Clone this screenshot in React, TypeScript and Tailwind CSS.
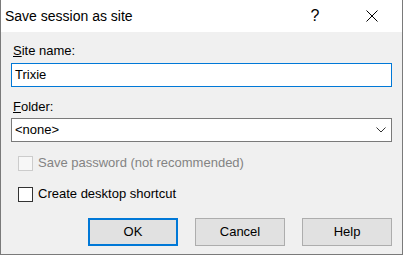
import React from 'react';

const font = { fontFamily: '"Liberation Sans", Arial, sans-serif' };

export default function App() {
  return (
    <div className="w-[403px] h-[255px] bg-[#f0f0f0] flex flex-col border-x border-b border-[#7a7a7a] text-black text-[13px] leading-[16px]" style={font}>
      {/* Title bar */}
      <div className="h-[32px] bg-white flex items-center shrink-0">
        <span className="pl-[4px] text-[14px] flex-1">Save session as site</span>
        <span className="w-[46px] text-center text-[16px] mr-[11px]">?</span>
        <div className="w-[46px] h-[32px] flex items-center justify-center mr-[7px]">
          <svg width="12" height="12" viewBox="0 0 12 12" stroke="#000" strokeWidth="1">
            <path d="M0.5 0.5L11.5 11.5M11.5 0.5L0.5 11.5" />
          </svg>
        </div>
      </div>

      {/* Body */}
      <div className="flex flex-col px-[10px]">
        <label className="mt-[11px] pl-[2px] h-[16px]">
          <span className="underline">S</span>ite name:
        </label>
        <div className="mt-[4px] h-[24px] bg-white border border-[#0078d7] flex items-center pl-[3px]">
          Trixie
        </div>

        <label className="mt-[12px] pl-[2px] h-[16px]">
          <span className="underline">F</span>older:
        </label>
        <div className="mt-[3px] h-[24px] bg-white border border-[#7a7a7a] flex items-center pl-[3px] pr-[5px]">
          <span className="flex-1">&lt;none&gt;</span>
          <svg width="10" height="6" viewBox="0 0 10 6" fill="none" stroke="#333" strokeWidth="1">
            <path d="M0.5 0.5L5 5L9.5 0.5" />
          </svg>
        </div>

        <div className="mt-[13px] ml-[7px] flex items-center gap-[5px] text-[#838383]">
          <div className="w-[15px] h-[15px] border border-[#cccccc] bg-[#f7f7f7]" />
          <span>Save password (not recommended)</span>
        </div>

        <div className="mt-[15px] ml-[7px] flex items-center gap-[5px]">
          <div className="w-[15px] h-[15px] border border-[#333333] bg-white" />
          <span>Create desktop shortcut</span>
        </div>

        <div className="mt-[16px] flex justify-end gap-[17px]">
          <button className="w-[90px] h-[28px] bg-[#e1e1e1] border-2 border-[#0078d7]">OK</button>
          <button className="w-[90px] h-[28px] bg-[#e1e1e1] border border-[#adadad]">Cancel</button>
          <button className="w-[90px] h-[28px] bg-[#e1e1e1] border border-[#adadad]">Help</button>
        </div>
      </div>
    </div>
  );
}
